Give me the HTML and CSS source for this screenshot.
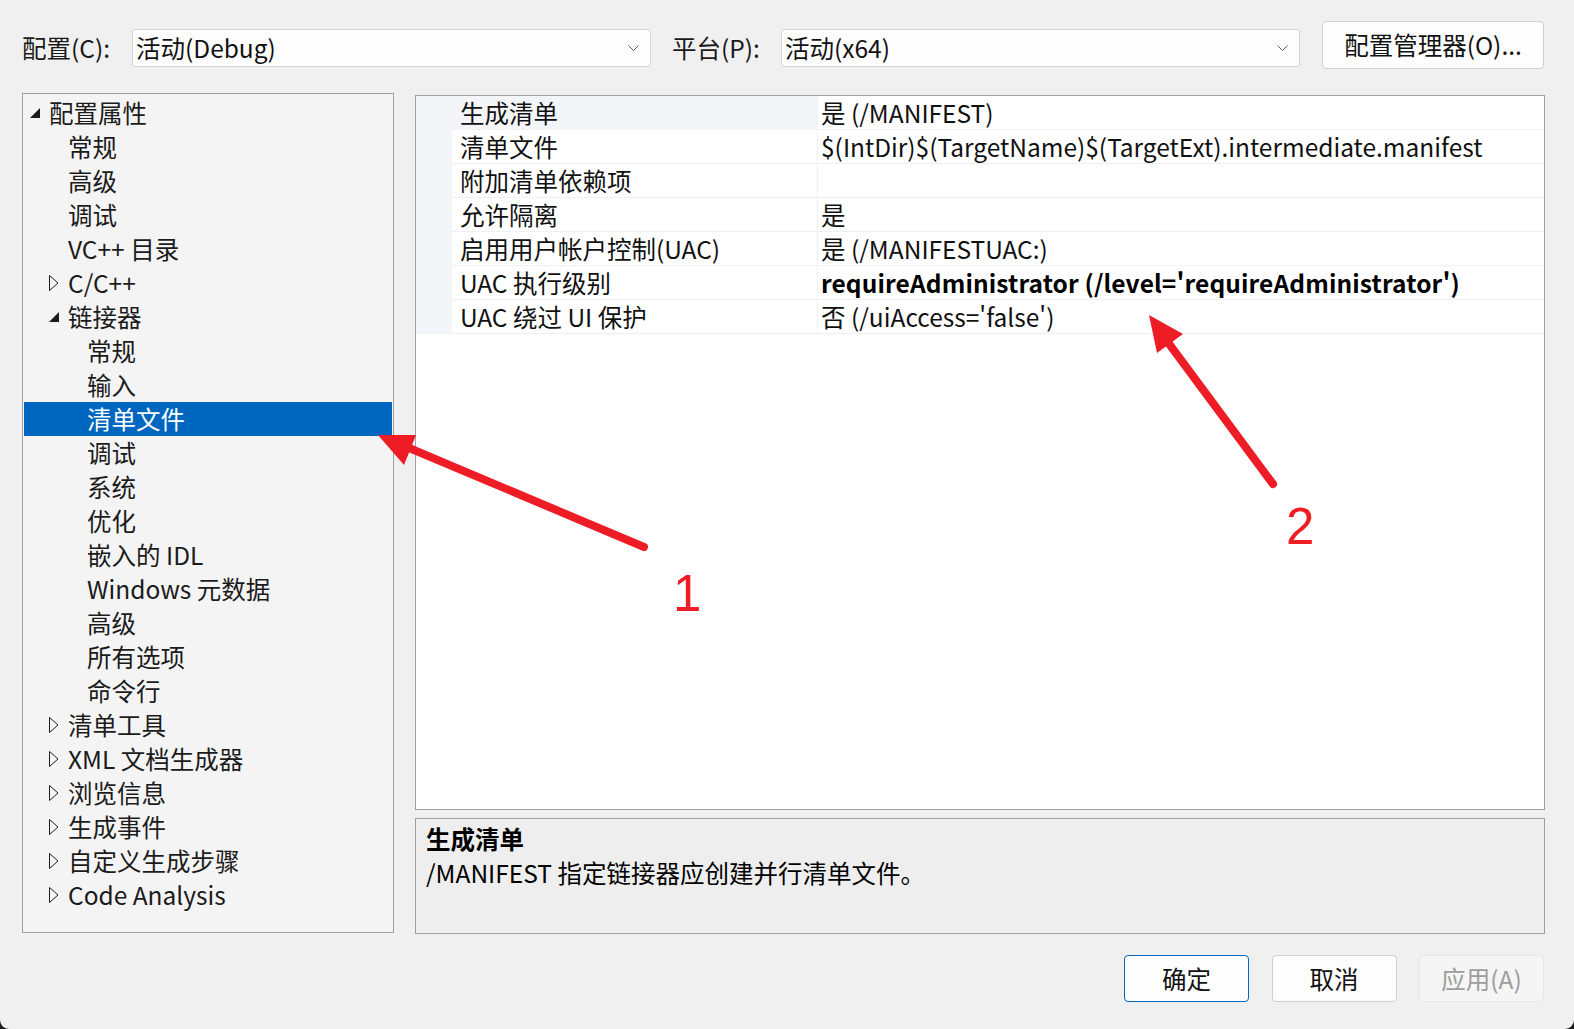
FILE: index.html
```html
<!DOCTYPE html>
<html lang="zh-CN">
<head>
<meta charset="utf-8">
<title>属性页</title>
<link rel="stylesheet" href="styles.css">
</head>
<body>
<div class="window">
  <div class="toprow">
    <span class="label">配置(C):</span>
    <div class="combo"><span>活动(Debug)</span><svg class="chev" width="11" height="7" viewBox="0 0 11 7"><polyline points="0.5,0.5 5.5,5.5 10.5,0.5" fill="none" stroke="#5a5a5a" stroke-width="1"/></svg></div>
    <span class="label label2">平台(P):</span>
    <div class="combo"><span>活动(x64)</span><svg class="chev" width="11" height="7" viewBox="0 0 11 7"><polyline points="0.5,0.5 5.5,5.5 10.5,0.5" fill="none" stroke="#5a5a5a" stroke-width="1"/></svg></div>
    <button class="btn mgr">配置管理器(O)...</button>
  </div>

  <div class="main">
    <div class="tree">
      <div class="node l0"><span class="tw"><svg width="10" height="10" viewBox="0 0 10 10"><polygon points="10,0 10,10 0,10" fill="#1b1b1b"/></svg></span>配置属性</div>
      <div class="node l1"><span class="tw"></span>常规</div>
      <div class="node l1"><span class="tw"></span>高级</div>
      <div class="node l1"><span class="tw"></span>调试</div>
      <div class="node l1"><span class="tw"></span>VC++ 目录</div>
      <div class="node l1 col"><span class="tw"><svg width="10" height="16" viewBox="0 0 10 16"><polygon points="0.5,0.5 9,8 0.5,15.5" fill="none" stroke="#1b1b1b" stroke-width="1"/></svg></span>C/C++</div>
      <div class="node l1"><span class="tw"><svg width="10" height="10" viewBox="0 0 10 10"><polygon points="10,0 10,10 0,10" fill="#1b1b1b"/></svg></span>链接器</div>
      <div class="node l2"><span class="tw"></span>常规</div>
      <div class="node l2"><span class="tw"></span>输入</div>
      <div class="node l2 sel"><span class="tw"></span>清单文件</div>
      <div class="node l2"><span class="tw"></span>调试</div>
      <div class="node l2"><span class="tw"></span>系统</div>
      <div class="node l2"><span class="tw"></span>优化</div>
      <div class="node l2"><span class="tw"></span>嵌入的 IDL</div>
      <div class="node l2"><span class="tw"></span>Windows 元数据</div>
      <div class="node l2"><span class="tw"></span>高级</div>
      <div class="node l2"><span class="tw"></span>所有选项</div>
      <div class="node l2"><span class="tw"></span>命令行</div>
      <div class="node l1"><span class="tw"><svg width="10" height="16" viewBox="0 0 10 16"><polygon points="0.5,0.5 9,8 0.5,15.5" fill="none" stroke="#1b1b1b" stroke-width="1"/></svg></span>清单工具</div>
      <div class="node l1"><span class="tw"><svg width="10" height="16" viewBox="0 0 10 16"><polygon points="0.5,0.5 9,8 0.5,15.5" fill="none" stroke="#1b1b1b" stroke-width="1"/></svg></span>XML 文档生成器</div>
      <div class="node l1"><span class="tw"><svg width="10" height="16" viewBox="0 0 10 16"><polygon points="0.5,0.5 9,8 0.5,15.5" fill="none" stroke="#1b1b1b" stroke-width="1"/></svg></span>浏览信息</div>
      <div class="node l1"><span class="tw"><svg width="10" height="16" viewBox="0 0 10 16"><polygon points="0.5,0.5 9,8 0.5,15.5" fill="none" stroke="#1b1b1b" stroke-width="1"/></svg></span>生成事件</div>
      <div class="node l1"><span class="tw"><svg width="10" height="16" viewBox="0 0 10 16"><polygon points="0.5,0.5 9,8 0.5,15.5" fill="none" stroke="#1b1b1b" stroke-width="1"/></svg></span>自定义生成步骤</div>
      <div class="node l1"><span class="tw"><svg width="10" height="16" viewBox="0 0 10 16"><polygon points="0.5,0.5 9,8 0.5,15.5" fill="none" stroke="#1b1b1b" stroke-width="1"/></svg></span>Code Analysis</div>
    </div>

    <div class="right">
      <div class="grid">
        <div class="row first"><div class="gut"></div><div class="name">生成清单</div><div class="val">是 (/MANIFEST)</div></div>
        <div class="row"><div class="gut"></div><div class="name">清单文件</div><div class="val">$(IntDir)$(TargetName)$(TargetExt).intermediate.manifest</div></div>
        <div class="row"><div class="gut"></div><div class="name">附加清单依赖项</div><div class="val"></div></div>
        <div class="row"><div class="gut"></div><div class="name">允许隔离</div><div class="val">是</div></div>
        <div class="row"><div class="gut"></div><div class="name">启用用户帐户控制(UAC)</div><div class="val">是 (/MANIFESTUAC:)</div></div>
        <div class="row"><div class="gut"></div><div class="name">UAC 执行级别</div><div class="val bold">requireAdministrator (/level='requireAdministrator')</div></div>
        <div class="row"><div class="gut"></div><div class="name">UAC 绕过 UI 保护</div><div class="val">否 (/uiAccess='false')</div></div>
      </div>
      <div class="desc">
        <div class="dtitle">生成清单</div>
        <div class="dtext">/MANIFEST 指定链接器应创建并行清单文件。</div>
      </div>
    </div>
  </div>

  <div class="buttons">
    <button class="btn dlg ok">确定</button>
    <button class="btn dlg">取消</button>
    <button class="btn dlg dis">应用(A)</button>
  </div>

  <svg class="annot" width="1574" height="1029" viewBox="0 0 1574 1029">
    <line x1="644" y1="547" x2="402" y2="445" stroke="#ee1c25" stroke-width="8" stroke-linecap="round"/>
    <polygon points="378,435 416,435 404,465" fill="#ee1c25"/>
    <line x1="1273" y1="484" x2="1164" y2="337" stroke="#ee1c25" stroke-width="8" stroke-linecap="round"/>
    <polygon points="1149,315 1183,334 1157,353" fill="#ee1c25"/>
  </svg>
  <span class="num n1">1</span>
  <span class="num n2">2</span>
</div>
</body>
</html>
```

FILE: styles.css
```css
html, body {
  margin: 0;
  padding: 0;
}
body {
  background: #1e1e1e;
  font-family: "Noto Sans CJK SC", "Noto Sans", sans-serif;
  font-size: 24.5px;
  color: #000;
}
.window {
  position: relative;
  width: 1574px;
  height: 1029px;
  background: #f0f0f0;
  border-radius: 0 0 9px 9px;
  overflow: hidden;
  display: flex;
  flex-direction: column;
}
.toprow {
  display: flex;
  align-items: center;
  height: 48px;
  margin-top: 21px;
  padding-left: 22px;
}
.label {
  width: 110px;
  line-height: 30px;
  margin-top: 6px;
  color: #1a1a1a;
}
.label2 {
  width: 109px;
  margin-left: 21px;
}
.combo {
  box-sizing: border-box;
  width: 519px;
  height: 38px;
  margin-top: 6px;
  background: #fdfdfd;
  border: 1px solid #d4d4d4;
  border-radius: 3px;
  display: flex;
  align-items: center;
  justify-content: space-between;
  padding: 0 11px 0 3px;
  line-height: 30px;
  color: #111;
}
.chev {
  display: block;
}
.btn {
  font-family: inherit;
  font-size: 24.5px;
  box-sizing: border-box;
  background: #fdfdfd;
  border: 1px solid #d0d0d0;
  border-radius: 4px;
  color: #111;
  padding: 0;
  line-height: 30px;
}
.mgr {
  width: 222px;
  height: 48px;
  margin-left: 22px;
}
.main {
  display: flex;
  margin-top: 24px;
  padding-left: 22px;
  gap: 21px;
}
.tree {
  box-sizing: border-box;
  width: 372px;
  height: 840px;
  background: #f4f4f4;
  border: 1px solid #a0a0a0;
  padding: 2px 1px 0 1px;
}
.node {
  display: flex;
  align-items: center;
  height: 34px;
  color: #1b1b1b;
  white-space: nowrap;
  line-height: 30px;
}
.node.l0 { padding-left: 6px; }
.node.l1 { padding-left: 25px; }
.node.l2 { padding-left: 44px; }
.tw {
  width: 19px;
  flex: none;
  display: flex;
  align-items: center;
}
.tw svg { display: block; }
.node.sel {
  background: #0067c0;
  color: #fff;
}
.right {
  display: flex;
  flex-direction: column;
  width: 1130px;
}
.grid {
  box-sizing: border-box;
  height: 715px;
  margin-top: 2px;
  background: #fff;
  border: 1px solid #a0a0a0;
}
.row {
  display: grid;
  grid-template-columns: 36px 366px 1fr;
  height: 34px;
}
.row > div {
  box-sizing: border-box;
  border-bottom: 1px solid #eff0f6;
  line-height: 30px;
  white-space: nowrap;
  display: flex;
  align-items: center;
}
.gut {
  background: #f3f5f9;
  border-bottom-color: #f3f5f9 !important;
}
.name {
  padding-left: 8px;
  border-right: 1px solid #eff0f6;
  color: #111;
}
.row.first .name {
  background: #f3f5f9;
}
.val {
  padding-left: 3px;
  color: #111;
}
.val.bold {
  font-weight: 700;
  letter-spacing: 0.12px;
  color: #000;
}
.desc {
  box-sizing: border-box;
  height: 116px;
  margin-top: 8px;
  background: #eeeeee;
  border: 1px solid #a0a0a0;
  padding: 3px 10px;
  line-height: 34px;
}
.dtitle {
  font-weight: 700;
}
.buttons {
  display: flex;
  justify-content: flex-end;
  gap: 22.5px;
  margin-top: 21px;
  padding-right: 30px;
}
.dlg {
  width: 125px;
  height: 47px;
}
.ok {
  border: 1px solid #0067c0;
}
.dis {
  background: #f5f5f5;
  border-color: #e6e6e6;
  color: #9d9d9d;
}
.annot {
  position: absolute;
  left: 0;
  top: 0;
  pointer-events: none;
}
.num {
  position: absolute;
  font-family: "Liberation Sans", sans-serif;
  font-size: 51px;
  line-height: 1;
  color: #ee1c25;
}
.n1 { left: 673px; top: 568px; }
.n2 { left: 1286px; top: 501px; }
```
